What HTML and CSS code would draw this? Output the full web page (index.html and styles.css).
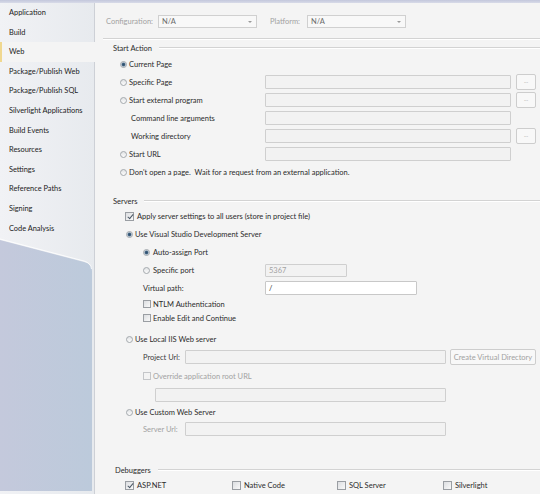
FILE: index.html
```html
<!DOCTYPE html>
<html lang="en">
<head>
    <meta charset="UTF-8">
    <meta name="viewport" content="width=device-width, initial-scale=1.0">
    <title>Web - Project Properties</title>
    <link rel="stylesheet" href="styles.css">
</head>
<body>
    <div class="topbar"></div>
    <div class="window">
        <div class="sidebar">
            <ul class="tabs">
                <li>Application</li>
                <li>Build</li>
                <li class="active">Web</li>
                <li>Package/Publish Web</li>
                <li>Package/Publish SQL</li>
                <li>Silverlight Applications</li>
                <li>Build Events</li>
                <li>Resources</li>
                <li>Settings</li>
                <li>Reference Paths</li>
                <li>Signing</li>
                <li>Code Analysis</li>
            </ul>
            <div class="sidebar-fill">
                <svg width="94" height="253" viewBox="0 0 94 253">
                    <defs>
                        <linearGradient id="blueFill" x1="0" y1="0" x2="1" y2="0">
                            <stop offset="0" stop-color="#c4c9dc"/>
                            <stop offset="1" stop-color="#bccadb"/>
                        </linearGradient>
                    </defs>
                    <path d="M0,2 L84,24 Q92,26 92,33 L92,253 L0,253 Z" fill="url(#blueFill)"/>
                    <path d="M0,1 L84,23 Q91,25 91.5,31" fill="none" stroke="#ffffff" stroke-opacity="0.8"/>
                </svg>
            </div>
        </div>

        <div class="content">
            <div class="config">
                <span class="dim conf-label">Configuration:</span>
                <div class="combo conf-combo">N/A</div>
                <span class="dim plat-label">Platform:</span>
                <div class="combo">N/A</div>
            </div>
            <div class="sep"></div>

            <!-- Start Action -->
            <div class="group start-action">
                <div class="group-head"><span>Start Action</span><i></i></div>
                <div class="row">
                    <span class="lbl"><b class="radio on"></b>Current Page</span>
                </div>
                <div class="row">
                    <span class="lbl"><b class="radio"></b>Specific Page</span>
                    <div class="field wide"></div>
                    <div class="browse">...</div>
                </div>
                <div class="row">
                    <span class="lbl"><b class="radio"></b>Start external program</span>
                    <div class="field wide"></div>
                    <div class="browse">...</div>
                </div>
                <div class="row">
                    <span class="lbl sub">Command line arguments</span>
                    <div class="field wide"></div>
                </div>
                <div class="row">
                    <span class="lbl sub">Working directory</span>
                    <div class="field wide"></div>
                    <div class="browse">...</div>
                </div>
                <div class="row">
                    <span class="lbl"><b class="radio"></b>Start URL</span>
                    <div class="field wide"></div>
                </div>
                <div class="row">
                    <span class="lbl"><b class="radio"></b>Don't open a page.&nbsp; Wait for a request from an external application.</span>
                </div>
            </div>

            <!-- Servers -->
            <div class="group servers">
                <div class="group-head short-head"><span>Servers</span><i></i></div>
                <div class="row">
                    <b class="chk on"></b>Apply server settings to all users (store in project file)
                </div>
                <div class="row">
                    <b class="radio on main-radio"></b>Use Visual Studio Development Server
                </div>
                <div class="row indent">
                    <b class="radio on wide-gap"></b>Auto-assign Port
                </div>
                <div class="row indent">
                    <span class="port-label"><b class="radio wide-gap"></b>Specific port</span>
                    <div class="field port dim">5367</div>
                </div>
                <div class="row indent">
                    <span class="port-label">Virtual path:</span>
                    <div class="field vpath">/</div>
                </div>
                <div class="row indent short">
                    <b class="chk small"></b>NTLM Authentication
                </div>
                <div class="row indent short">
                    <b class="chk small"></b>Enable Edit and Continue
                </div>
                <div class="row iis">
                    <b class="radio main-radio"></b>Use Local IIS Web server
                </div>
                <div class="row indent">
                    <span class="url-label">Project Url:</span>
                    <div class="field url"></div>
                    <div class="button dim">Create Virtual Directory</div>
                </div>
                <div class="row indent tall">
                    <b class="chk small off"></b><span class="dim">Override application root URL</span>
                </div>
                <div class="row root-url">
                    <div class="field root"></div>
                </div>
                <div class="row mid">
                    <b class="radio main-radio"></b>Use Custom Web Server
                </div>
                <div class="row indent">
                    <span class="url-label dim">Server Url:</span>
                    <div class="field url"></div>
                </div>
            </div>

            <!-- Debuggers -->
            <div class="group debuggers">
                <div class="group-head short-head"><span>Debuggers</span><i></i></div>
                <div class="row debug-row">
                    <span class="debug-item"><b class="chk on"></b>ASP.NET</span>
                    <span class="debug-item"><b class="chk"></b>Native Code</span>
                    <span class="debug-item"><b class="chk"></b>SQL Server</span>
                    <span class="debug-item"><b class="chk"></b>Silverlight</span>
                </div>
            </div>
        </div>
    </div>
</body>
</html>
```

FILE: styles.css
```css
body {
    margin: 0;
    width: 540px;
    height: 494px;
    overflow: hidden;
    font-family: Lato, "Open Sans", sans-serif;
    font-size: 7.5px;
    color: #2b2b2b;
    background: #f4f4f4;
}
.topbar {
    height: 3px;
    background: linear-gradient(#c3c7dc, #d8dbe8);
}
.window {
    display: flex;
    height: 491px;
}

/* left tab strip */
.sidebar {
    width: 94px;
    flex: none;
    display: flex;
    flex-direction: column;
    background: linear-gradient(to right, #f1f2f5, #e7eaee);
    border-right: 1px solid #cdd0d6;
}
.tabs {
    list-style: none;
    margin: 0;
    padding: 0;
}
.tabs li {
    height: 19.6px;
    line-height: 19.6px;
    padding-left: 9px;
    font-size: 7.4px;
    color: #222222;
    white-space: nowrap;
}
.tabs li.active {
    background: #f4f4f4;
    margin-right: -1px;
    border-left: 2px solid #f0d890;
    padding-left: 7px;
}
.sidebar-fill {
    flex: 1;
    overflow: hidden;
}
.sidebar-fill svg {
    display: block;
}

/* right side */
.content {
    flex: 1;
    background: #f4f4f4;
}
.dim {
    color: #a2a2a2;
}
.config {
    display: flex;
    align-items: center;
    height: 13px;
    padding: 12px 0 0 11px;
}
.conf-label {
    width: 52px;
}
.plat-label {
    width: 37px;
    margin-left: 13px;
}
.combo {
    width: 99px;
    height: 13px;
    box-sizing: border-box;
    border: 1px solid #d0d0d0;
    background: #f8f8f8;
    color: #6a6a6a;
    padding-left: 3px;
    display: flex;
    align-items: center;
    justify-content: space-between;
}
.combo::after {
    content: "";
    margin-right: 4px;
    border-left: 2px solid transparent;
    border-right: 2px solid transparent;
    border-top: 2px solid #9a9a9a;
}
.sep {
    margin: 10px 0 0 8px;
    border-top: 1px solid #d3d3d3;
    border-bottom: 1px solid #ffffff;
}

.group-head {
    display: flex;
    align-items: center;
    height: 14px;
    padding-left: 18px;
}
.group-head.short-head {
    height: 12px;
}
.group-head i {
    flex: 1;
    margin-left: 7px;
    border-top: 1px solid #d3d3d3;
    border-bottom: 1px solid #ffffff;
}
.start-action {
    margin-top: 1px;
}
.servers {
    margin-top: 14px;
}
.debuggers {
    margin-top: 26px;
}
.debuggers .group-head {
    padding-left: 20px;
}

.row {
    display: flex;
    align-items: center;
    height: 18px;
    white-space: nowrap;
}
.row.short {
    height: 14px;
}
.row.tall {
    height: 20px;
}
.row.mid {
    height: 16px;
}
.start-action .row {
    padding-left: 25px;
}
.servers .row {
    padding-left: 30px;
}
.servers .row.indent {
    padding-left: 48px;
}
.servers .row.iis {
    margin-top: 5px;
}
.servers .row.root-url {
    padding-left: 60px;
}
.lbl {
    width: 145px;
    flex: none;
    display: flex;
    align-items: center;
}
.lbl.sub {
    padding-left: 11px;
    box-sizing: border-box;
}
.port-label {
    width: 122px;
    flex: none;
    display: flex;
    align-items: center;
}
.url-label {
    width: 42px;
    flex: none;
    color: #3c3c3c;
}
.url-label.dim {
    color: #a2a2a2;
}

/* inputs */
.field {
    height: 14px;
    box-sizing: border-box;
    border: 1px solid #cfcfcf;
    border-radius: 1px;
    background: #f2f2f2;
    padding-left: 3px;
    display: flex;
    align-items: center;
}
.field.wide {
    width: 246px;
}
.field.port {
    width: 82px;
    height: 13px;
}
.field.vpath {
    width: 152px;
    background: #ffffff;
    border-color: #c8c8c8;
}
.field.url {
    width: 261px;
}
.field.root {
    width: 291px;
}
.browse {
    width: 20px;
    height: 16px;
    margin-left: 5px;
    box-sizing: border-box;
    border: 1px solid #cdcdcd;
    border-radius: 2px;
    background: #f8f8f8;
    color: #a8a8a8;
    font-size: 6px;
    text-align: center;
    line-height: 12px;
}
.button {
    width: 86px;
    height: 16px;
    margin-left: 4px;
    box-sizing: border-box;
    border: 1px solid #cdcdcd;
    border-radius: 2px;
    background: #f8f8f8;
    display: flex;
    align-items: center;
    justify-content: center;
}

/* radio buttons and check boxes */
.radio {
    width: 7px;
    height: 7px;
    flex: none;
    box-sizing: border-box;
    border-radius: 50%;
    border: 1px solid #a3a8ad;
    background: linear-gradient(#e2e4e6, #fbfbfb);
    margin-right: 2px;
}
.radio.on {
    background: radial-gradient(circle, #2f4f6c 0, #3b5d7c 1.3px, #9fb2c4 2px, #eef0f2 2.6px);
}
.radio.main-radio {
    margin-left: 1px;
}
.radio.wide-gap {
    margin-right: 3px;
}
.chk {
    position: relative;
    width: 9px;
    height: 9px;
    flex: none;
    box-sizing: border-box;
    border: 1px solid #9a9ea3;
    background: linear-gradient(135deg, #dcdee1, #f9f9f9);
    margin-right: 3px;
}
.chk.small {
    width: 8px;
    height: 8px;
    margin-right: 2px;
}
.chk.off {
    border-color: #c4c6c9;
    background: #f3f3f3;
}
.chk.on::after {
    content: "";
    position: absolute;
    left: 2.5px;
    top: 0;
    width: 2px;
    height: 5px;
    border: solid #4b5866;
    border-width: 0 1px 1px 0;
    transform: rotate(40deg);
}

.debug-row {
    padding-left: 30px;
}
.debug-item {
    display: flex;
    align-items: center;
    width: 107px;
    flex: none;
}
.debug-item:nth-child(2) {
    width: 105px;
}
.debug-item:nth-child(3) {
    width: 106px;
}
```
